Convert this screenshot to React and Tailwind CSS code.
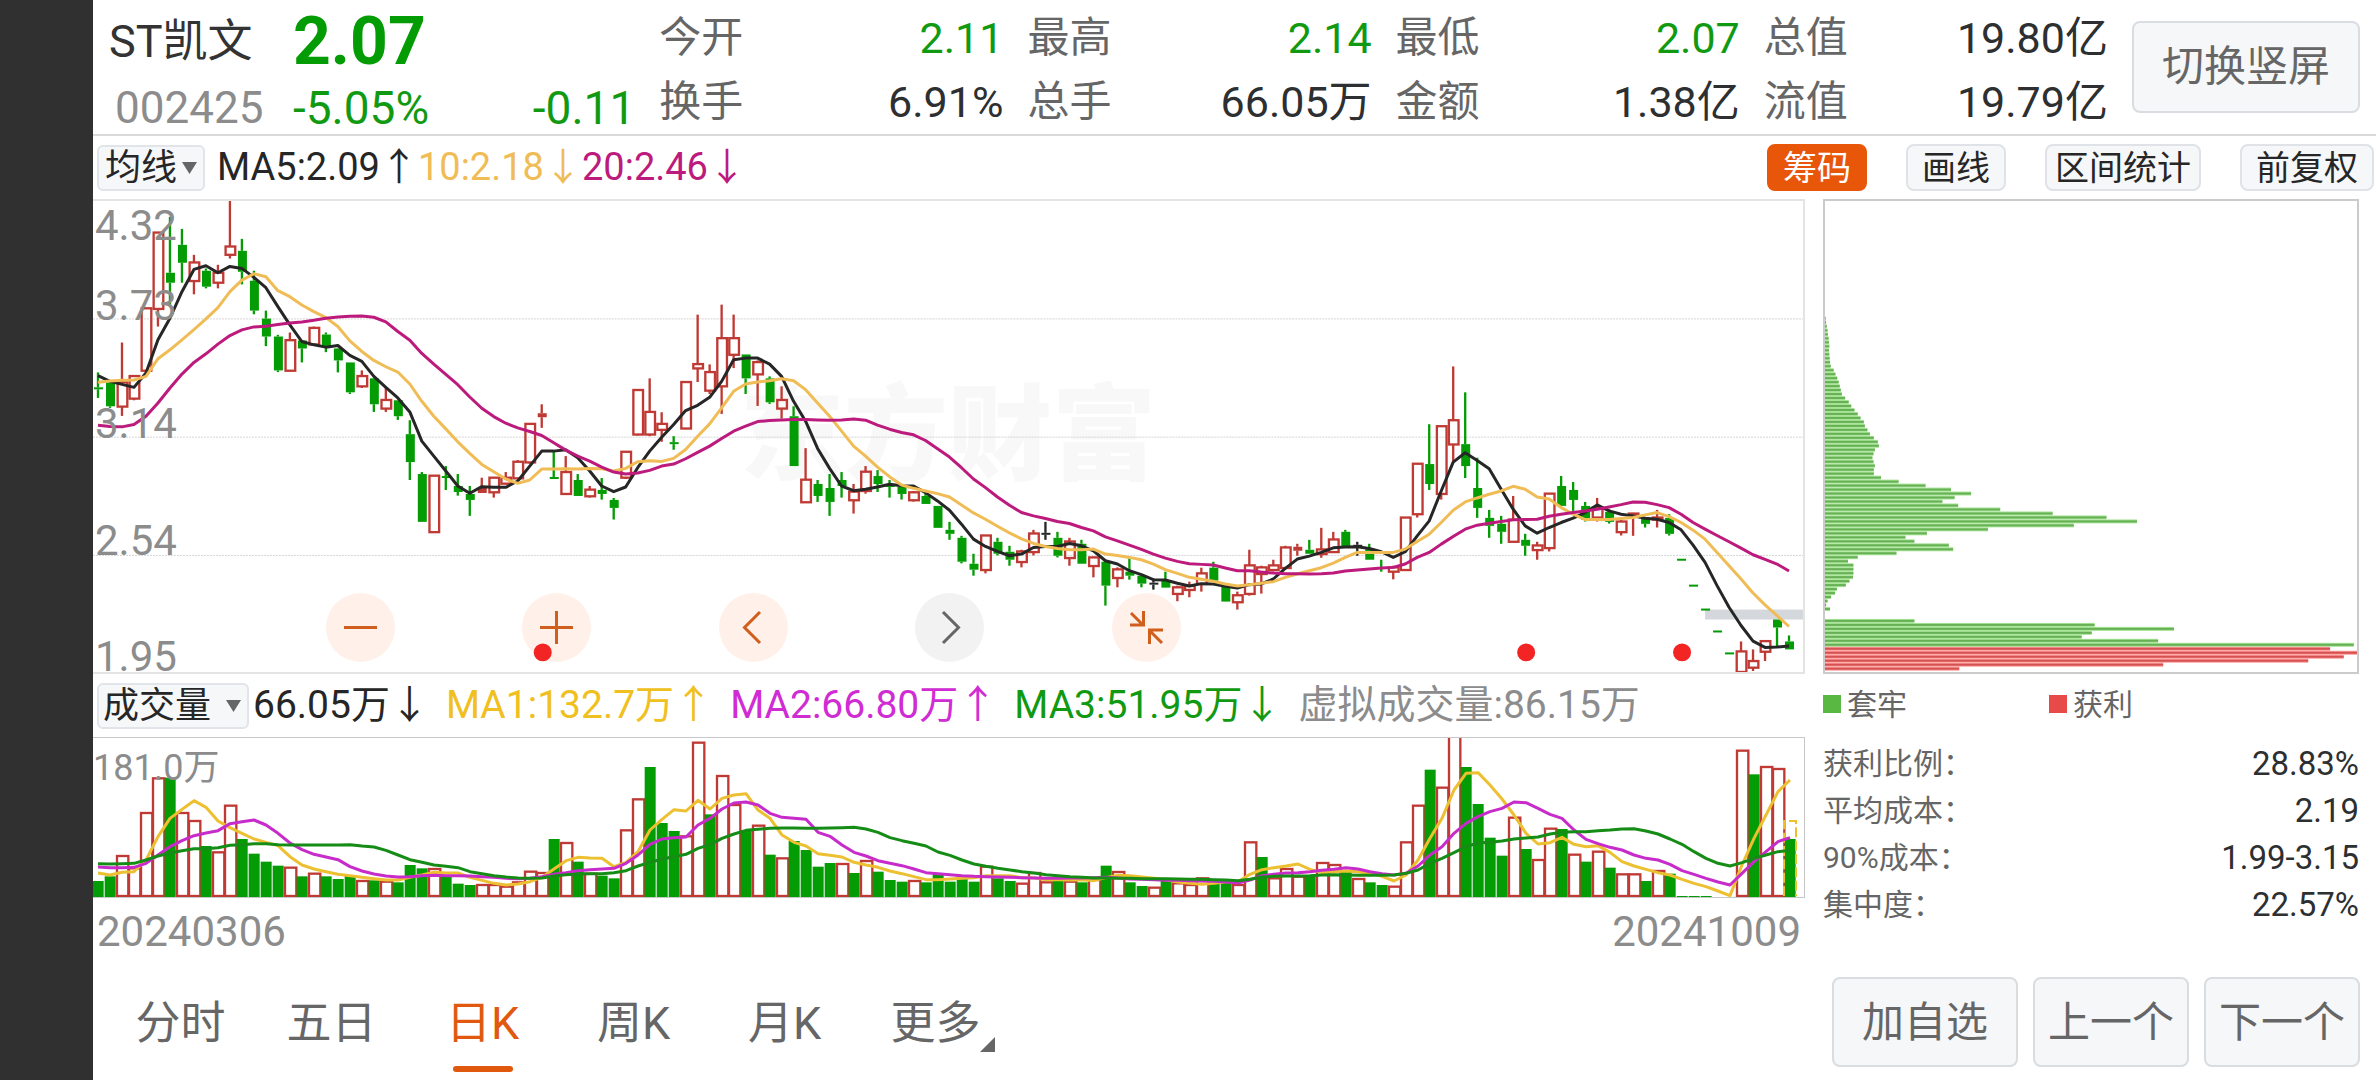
import React from "react";

const FONT = "font-['Roboto','Noto_Sans_CJK_SC',sans-serif]";

// Each candle: kind (g falling, r rising, f rising and filled, k flat), high, body top, body bottom, low.
const CANDLES = `g 543 588 594 620|g 570 573 645 650|r 453 573 646 674|r 552 554 622 627|r 350 350 538 540|r 122 122 352 405|g 75 243 273 338|g 111 159 213 273|r 189 212 268 308|g 230 237 285 290|r 219 243 273 290|r 27 164 189 200|g 141 177 240 278|g 237 267 357 368|g 357 381 435 464|g 430 435 537 542|r 423 446 538 540|g 447 447 471 513|r 405 409 459 462|g 423 429 465 482|g 470 471 507 543|g 513 513 603 608|r 537 554 585 590|g 560 561 639 662|r 590 626 652 662|g 627 627 675 686|g 687 729 813 867|g 843 849 993 993|r 854 854 1024 1024|g 825 855 861 897|g 849 885 903 914|g 885 909 927 975|f 860 891 906 906|r 858 860 904 920|r 843 860 878 880|r 807 812 862 864|r 698 698 814 818|f 639 666 678 710|g 780 858 864 864|r 795 843 909 909|g 849 867 915 915|r 885 896 916 920|g 861 897 909 926|g 921 927 951 986|r 782 782 860 864|r 596 596 730 733|r 561 662 730 735|r 663 698 716 752|g 735 753 759 776|r 572 572 712 714|r 369 518 531 572|r 519 542 598 608|r 339 440 585 668|r 369 440 490 530|g 489 489 561 608|r 507 512 549 644|g 555 561 633 638|r 585 626 652 682|g 645 675 825 825|r 771 866 934 936|g 867 879 915 933|g 849 891 933 975|g 843 867 885 920|r 879 902 928 968|r 825 842 900 908|g 837 855 879 903|g 867 882 888 920|g 885 887 909 926|r 900 904 928 932|g 905 915 939 939|g 945 945 1011 1011|g 993 1017 1029 1047|g 1035 1041 1113 1118|g 1089 1119 1137 1155|r 1034 1034 1138 1148|g 1041 1053 1089 1094|g 1065 1083 1107 1125|r 1077 1082 1114 1130|r 1017 1028 1084 1094|k 993 1026 1032 1047|g 1023 1041 1095 1100|r 1041 1052 1102 1125|g 1047 1059 1119 1119|r 1098 1100 1126 1160|g 1110 1113 1185 1245|r 1130 1136 1162 1190|g 1101 1143 1155 1167|g 1150 1155 1179 1190|k 1163 1176 1182 1197|g 1143 1170 1191 1191|r 1185 1190 1210 1232|r 1173 1186 1198 1220|r 1131 1148 1180 1203|g 1113 1131 1170 1173|g 1180 1185 1233 1233|r 1203 1214 1235 1257|r 1077 1124 1210 1215|r 1125 1130 1150 1209|r 1107 1124 1138 1142|r 1065 1070 1132 1133|f 1059 1068 1080 1095|g 1047 1077 1089 1089|r 1011 1076 1090 1101|r 1023 1046 1084 1086|g 1017 1023 1071 1071|k 1053 1062 1068 1095|g 1059 1075 1107 1107|g 1107 1129 1135 1143|r 1125 1130 1143 1166|r 980 980 1138 1140|r 818 818 970 980|g 699 819 879 897|r 705 705 909 926|r 525 687 760 810|g 603 759 825 861|g 800 891 951 981|g 957 981 1005 1041|g 975 999 1023 1059|r 915 986 1053 1054|g 1029 1047 1065 1095|r 1053 1064 1078 1107|r 908 908 1072 1082|g 855 885 945 945|g 873 897 927 960|g 933 945 987 992|r 921 950 980 992|g 955 963 993 998|r 985 992 1024 1034|r 966 968 970 1035|g 978 981 999 1010|r 957 980 986 1010|g 970 981 1029 1034|g 1104 1104 1110 1110|g 1182 1182 1188 1188|g 1254 1254 1260 1260|g 1320 1320 1326 1326|g 1386 1386 1392 1392|r 1353 1383 1445 1445|r 1377 1412 1432 1442|r 1351 1352 1384 1412|g 1287 1287 1311 1368|g 1335 1353 1377 1377`
  .split("|")
  .map((row) => {
    const [kind, ...v] = row.split(" ");
    return [kind, ...v.map(Number)];
  });

const MA5 = [553,570,579,588,545,445,380,300,233,222,243,224,230,257,288,345,400,450,460,467,462,492,510,555,588,620,662,750,795,840,885,907,887,889,889,870,825,780,780,776,800,840,885,902,888,830,780,738,700,658,642,618,570,505,500,500,518,555,630,690,772,832,885,899,895,888,880,884,885,905,930,958,1000,1045,1067,1082,1095,1090,1070,1067,1067,1058,1065,1080,1110,1120,1140,1152,1167,1168,1178,1186,1179,1180,1187,1192,1182,1180,1165,1133,1105,1096,1085,1071,1069,1068,1073,1083,1100,1083,1035,990,900,813,785,808,833,895,955,1005,1027,1010,995,982,965,942,960,970,975,982,985,995,1017,1063,1115,1185,1250,1305,1352,1371,1370,1367];
const MA10 = [573,569,567,566,555,502,475,445,414,382,348,300,265,246,255,297,315,340,360,378,405,448,480,507,526,542,578,630,675,713,752,787,820,842,864,877,867,834,834,833,834,832,833,840,832,812,809,811,802,775,735,698,650,600,578,572,568,562,568,595,635,675,720,765,795,828,857,882,892,900,908,918,942,966,985,1006,1026,1044,1058,1067,1073,1077,1077,1075,1090,1094,1100,1107,1120,1137,1148,1160,1166,1172,1180,1186,1182,1178,1173,1160,1150,1140,1131,1117,1100,1085,1085,1085,1085,1075,1052,1030,995,958,933,921,910,900,886,895,918,924,950,970,986,986,986,983,980,972,965,977,995,1018,1045,1085,1125,1165,1207,1243,1275,1308];
const MA20 = [702,706,707,700,675,635,590,548,513,487,458,432,415,406,404,399,394,391,386,380,376,374,373,377,391,420,446,486,518,549,580,617,651,676,696,710,721,733,755,777,795,810,828,843,849,846,838,825,819,803,784,765,742,720,705,691,688,686,685,685,686,687,686,683,687,702,714,724,731,748,773,798,830,864,890,918,943,965,975,983,992,998,1010,1020,1038,1050,1063,1076,1090,1102,1112,1119,1121,1123,1132,1140,1140,1144,1147,1149,1149,1150,1149,1147,1141,1138,1135,1132,1130,1120,1100,1085,1060,1037,1015,1003,997,992,987,986,985,976,970,965,960,955,948,941,933,934,941,950,970,995,1015,1034,1053,1072,1092,1106,1120,1141];

const VOLUME = "g628 g614 r553 r590 r424 r320 g318 r424 r448 g523 r542 r402 g502 g546 g570 g582 r588 g614 r606 g614 g622 g612 r628 g626 r630 g632 g580 g590 r592 g614 g636 g640 r640 r640 r645 r632 r600 r604 g502 r514 g570 r606 g612 g620 r476 r383 g286 g454 g478 r494 r213 g428 r313 r400 g476 r462 g549 r560 g508 g535 g585 g574 r577 g604 r568 g600 g625 g630 r628 g632 g606 g630 g610 g630 r585 g620 g628 r636 r604 r632 g628 r630 g632 r625 g582 r601 g632 g643 r648 g628 r635 r640 r620 g632 g634 r640 r512 g556 r620 r592 r615 g610 r574 r580 g600 r622 g632 g640 r645 r512 r402 g294 r348 r195 g286 g397 g498 g552 r438 g532 r565 r471 g472 r549 g570 r540 g588 r608 r608 g628 r598 g606 g673 g673 g673 g676 g676 r237 g308 r286 r292 g502"
  .split(" ")
  .map((t) => [t[0], Number(t.slice(1))]);
const VMA1 = [604,610,602,600,565,495,440,413,387,407,448,468,485,502,512,522,555,580,592,600,608,612,617,621,625,625,617,610,602,604,604,617,626,635,640,637,630,617,592,567,557,559,560,585,572,540,475,443,414,418,386,412,380,370,366,415,440,490,512,523,546,551,556,572,580,587,598,606,615,624,624,622,620,618,612,612,612,618,618,624,624,625,624,627,618,611,612,616,620,624,631,635,638,635,630,630,608,594,588,583,577,593,603,600,598,600,605,614,628,610,565,500,440,355,305,303,340,382,430,485,517,513,497,518,525,522,542,570,583,593,603,610,623,635,645,658,672,580,500,430,360,325];
const VMA2 = [586,588,588,587,575,550,525,507,492,484,477,456,450,445,460,485,514,534,548,556,564,585,598,607,613,616,615,612,611,612,612,613,615,617,620,621,620,615,608,603,597,594,592,590,575,550,518,502,498,496,460,440,412,394,391,400,425,437,440,443,482,494,520,542,553,567,575,582,592,603,606,609,612,614,615,616,617,618,619,620,620,619,619,618,617,619,622,623,624,626,626,627,628,629,631,634,625,612,608,604,603,600,596,593,588,592,600,606,610,605,583,550,525,485,455,435,420,410,391,393,410,428,440,475,503,516,527,535,550,560,565,578,597,608,620,631,640,605,570,540,510,498];
const VMA3 = [576,577,576,575,565,553,544,537,531,531,528,521,519,516,516,519,520,520,520,520,520,519,523,526,536,550,564,572,580,584,588,600,606,612,616,619,620,619,613,609,607,606,606,603,597,583,572,562,555,548,530,519,500,487,476,473,470,469,469,470,470,469,468,467,472,482,498,507,515,523,541,551,565,577,584,590,595,600,604,609,612,615,617,619,619,620,620,621,621,621,622,623,623,624,625,627,623,616,614,613,613,612,610,609,610,611,611,611,610,605,595,575,560,543,525,514,512,508,502,499,496,487,482,480,480,477,475,472,471,478,487,502,518,540,560,575,583,573,560,550,540,536];

// Chip distribution, one bar for each price step from high to low; the last six are in profit.
const CHIPS = [2,3,5,7,8,10,11,12,11,12,13,14,16,24,29,34,38,41,44,47,56,66,73,82,91,99,108,111,118,125,136,147,150,139,135,132,135,139,136,136,156,205,280,351,407,361,327,371,488,634,784,869,693,454,284,224,249,345,357,199,91,64,79,79,79,78,68,58,33,28,17,7,3,14,0,0,249,751,972,743,715,928,1473,1407,1482,1445,1346,942,374];

const GREEN = "#049c04";
const RED = "#bf3a34";
const BLACK = "#262626";
const xAt = (i) => 15 + 36 * i;
const line = (ys) => ys.map((y, i) => `${xAt(i)},${y}`).join(" ");

function Trend({ data, color }) {
  return <polyline points={line(data)} fill="none" stroke={color} strokeWidth="9" strokeLinejoin="round" />;
}

function Candle({ c, i }) {
  const [kind, high, top, bottom, low] = c;
  const x = xAt(i);
  const color = kind === "g" ? GREEN : kind === "k" ? BLACK : RED;
  return (
    <g>
      {high < top && <path d={`M${x} ${high}V${top}`} stroke={color} strokeWidth="7" />}
      {low > bottom && <path d={`M${x} ${bottom}V${low}`} stroke={color} strokeWidth="7" />}
      {kind === "r" ? (
        <rect x={x - 13} y={top} width="29" height={bottom - top} fill="none" stroke={color} strokeWidth="7" />
      ) : (
        <rect x={x - 12} y={top} width="27" height={bottom - top} fill={color} />
      )}
    </g>
  );
}

function PriceChart() {
  return (
    <svg viewBox="0 27 5133 1418" preserveAspectRatio="none" className="pointer-events-none relative block h-full w-full" role="img" aria-label="日K线图">
      {[382, 738, 1094].map((y) => (
        <path key={y} d={`M0 ${y}H5133`} stroke="#d4d4d4" strokeWidth="3" strokeDasharray="6 3" />
      ))}
      <rect x={xAt(134)} y="1257" width="294" height="30" fill="#d4d7dc" />
      {CANDLES.map((c, i) => (
        <Candle key={i} c={c} i={i} />
      ))}
      <Trend data={MA5} color={BLACK} />
      <Trend data={MA10} color="#f0bc55" />
      <Trend data={MA20} color="#bc1a7c" />
      {[1350, 4302, 4770].map((x) => (
        <circle key={x} cx={x} cy="1386" r="27" fill="#f22424" />
      ))}
    </svg>
  );
}

function VolumeChart() {
  return (
    <svg viewBox="0 199 5133 477" preserveAspectRatio="none" className="block h-full w-full" role="img" aria-label="成交量图">
      {VOLUME.map(([kind, y], i) =>
        kind === "g" ? (
          <rect key={i} x={xAt(i) - 16} y={y} width="33" height={676 - y} fill={GREEN} />
        ) : (
          <rect key={i} x={xAt(i) - 15} y={y} width="34" height={673 - y} fill="none" stroke={RED} strokeWidth="7" />
        )
      )}
      <path d={`M${xAt(141) - 18} 673V448h36V673`} fill="none" stroke="#f0c02c" strokeWidth="6" strokeDasharray="30 10" />
      <Trend data={VMA1} color="#ecc031" />
      <Trend data={VMA2} color="#c72ccb" />
      <Trend data={VMA3} color="#158c15" />
    </svg>
  );
}

function ChipChart() {
  return (
    <svg viewBox="0 27 1482 1420" preserveAspectRatio="none" className="block h-full w-full" role="img" aria-label="筹码分布">
      {CHIPS.map((w, i) => {
        const y = 381 + 12 * i;
        const profit = i >= CHIPS.length - 6;
        return (
          <g key={i}>
            <rect x="0" y={y - 6} width={w} height="12" fill={profit ? "#fd9a98" : "#a5e394"} />
            <rect x="0" y={y - 3} width={w} height="6" fill={profit ? "#d45252" : "#67b055"} />
          </g>
        );
      })}
    </svg>
  );
}

function Stat({ label, value, tone }) {
  return (
    <div className="flex h-[64px] items-center justify-between">
      <dt className="text-[#666666]">{label}</dt>
      <dd className={`text-[43px] ${tone}`}>{value}</dd>
    </div>
  );
}

const UP = "text-[#2d2f31]";
const DOWN = "text-[#119a11]";
const STATS = [
  [["今开", "2.11", DOWN], ["换手", "6.91%", UP]],
  [["最高", "2.14", DOWN], ["总手", "66.05万", UP]],
  [["最低", "2.07", DOWN], ["金额", "1.38亿", UP]],
  [["总值", "19.80亿", UP], ["流值", "19.79亿", UP]],
];

function Header() {
  return (
    <header className="grid grid-cols-[566fr_368fr_368fr_368fr_368fr_244fr] border-b-2 border-[#dadada] text-[42px] leading-[64px]">
      <div className="grid grid-cols-[184px_1fr] grid-rows-[66px_58px] pt-2.5 pr-6 pl-4">
        <h1 className="text-[45px] text-[#333333]">ST凯文</h1>
        <strong className="text-[66px] font-bold text-[#049c04]">2.07</strong>
        <span className="pl-1.5 text-[44px] text-[#8c8c8c]">002425</span>
        <div className="flex justify-between text-[46px] text-[#119a11]">
          <span>-5.05%</span>
          <span>-0.11</span>
        </div>
      </div>
      {STATS.map((pair) => (
        <dl key={pair[0][0]} className="pt-1.5 pr-6">
          {pair.map(([label, value, tone]) => (
            <Stat key={label} label={label} value={value} tone={tone} />
          ))}
        </dl>
      ))}
      <div className="flex items-center pr-4">
        <button className="h-[92px] w-full rounded-lg border-2 border-[#d9dde2] bg-[#f6f7f9] text-[#666666]">切换竖屏</button>
      </div>
    </header>
  );
}

function Picker({ label, options, className }) {
  return (
    <div className="relative flex items-center">
      <select aria-label={label} className={`h-[46px] appearance-none rounded-md border-2 border-[#e1e4e8] bg-[#f6f7f9] text-[36px] leading-[42px] text-[#262626] ${className}`}>
        {options.map((o) => (
          <option key={o}>{o}</option>
        ))}
      </select>
      <svg viewBox="0 0 15 12" className="pointer-events-none absolute right-2 h-3 w-[15px]" aria-hidden="true">
        <path d="M0 0h15L7.5 12z" fill="#666666" />
      </svg>
    </div>
  );
}

function ToolButton({ children, active, snug }) {
  return (
    <button
      aria-pressed={!!active}
      className={`h-[47px] rounded-lg border-2 text-[34px] leading-[42px] ${snug ? "px-2" : "px-3.5"} ${
        active ? "border-[#e8560a] bg-[#e8560a] text-white" : "border-[#dfe2e6] bg-[#f6f7f9] text-[#262626]"
      }`}
    >
      {children}
    </button>
  );
}

function Toolbar() {
  return (
    <div className="flex h-[63px] items-center justify-between pr-0.5 pl-1">
      <div className="flex items-center text-[38px]">
        <Picker label="主图指标" options={["均线", "BOLL"]} className="w-[108px] pl-1.5" />
        <span className="ml-3 text-[#262626]">MA5:2.09↑</span>
        <span className="text-[#f0bc55]">10:2.18↓</span>
        <span className="text-[#bc1a7c]">20:2.46↓</span>
      </div>
      <div className="flex gap-[39px]">
        <ToolButton active>筹码</ToolButton>
        <ToolButton>画线</ToolButton>
        <ToolButton snug>区间统计</ToolButton>
        <ToolButton>前复权</ToolButton>
      </div>
    </div>
  );
}

const CONTROLS = [
  ["缩小", "M18 34.5h33"],
  ["放大", "M18 34.5h33M34.5 18v33"],
  ["向左", "M41 19 25.500 34.500 41 50"],
  ["向右", "M28 19 43.500 34.500 28 50"],
  ["退出全屏", "M19 20 31 32M18 32h13.500V18M50 50 38 38M51 37H37.500V51"],
];

function ChartControls() {
  return (
    <div className="absolute right-[36.4%] bottom-2.5 left-[13.6%] flex justify-between">
      {CONTROLS.map(([name, d]) => {
        const off = name === "向右";
        return (
          <button key={name} aria-label={name} className={`size-[69px] rounded-full ${off ? "bg-[#f2f2f2]" : "bg-[#fff1e9]"}`}>
            <svg viewBox="0 0 69 69" className="size-full" fill="none" stroke={off ? "#666666" : "#d05e1c"} strokeWidth="3">
              <path d={d} />
            </svg>
          </button>
        );
      })}
    </div>
  );
}

function PricePanel() {
  return (
    <div className="relative h-[475px] border-2 border-l-0 border-[#e4e4e4]">
      <div className="absolute inset-0 flex items-center justify-center text-[104px] font-black text-[#f8f8f8]" aria-hidden="true">
        东方财富
      </div>
      <ChartControls />
      <PriceChart />
      <div className="pointer-events-none absolute inset-0 pl-0.5 text-[42px] leading-[40px] text-[#8c8c8c]">
        <span className="absolute top-[1%]">4.32</span>
        <span className="absolute top-[18%]">3.73</span>
        <span className="absolute top-[43%]">3.14</span>
        <span className="absolute top-[68%]">2.54</span>
        <span className="absolute bottom-[-1%]">1.95</span>
      </div>
    </div>
  );
}

function VolumeLegend() {
  return (
    <div className="flex h-[63px] items-center gap-[17px] pl-1 text-[39px] whitespace-nowrap">
      <div className="flex items-center gap-1 text-[#262626]">
        <Picker label="副图指标" options={["成交量", "MACD"]} className="w-[152px] pl-1" />
        <span>66.05万↓</span>
      </div>
      <span className="text-[#f0c020]">MA1:132.7万↑</span>
      <span className="text-[#d02cd4]">MA2:66.80万↑</span>
      <span className="text-[#119a11]">MA3:51.95万↓</span>
      <span className="text-[#8c8c8c]">虚拟成交量:86.15万</span>
    </div>
  );
}

const COSTS = [
  ["获利比例", "28.83%"],
  ["平均成本", "2.19"],
  ["90%成本", "1.99-3.15"],
  ["集中度", "22.57%"],
];

function ChipPanel() {
  return (
    <aside>
      <div className="h-[475px] border-2 border-[#cbcbcb]">
        <ChipChart />
      </div>
      <div className="grid h-[60px] grid-cols-[226fr_310fr] items-center text-[30px] text-[#666666]">
        <span className="flex items-center gap-1.5">
          <i className="size-[18px] bg-[#58b842]" />
          套牢
        </span>
        <span className="flex items-center gap-1.5">
          <i className="size-[18px] bg-[#e84a4a]" />
          获利
        </span>
      </div>
      <dl className="pt-1.5 text-[30px] leading-[47px] text-[#666666]">
        {COSTS.map(([label, value]) => (
          <div key={label} className="flex justify-between">
            <dt>{label}：</dt>
            <dd className="text-[33px] text-[#2d2f31]">{value}</dd>
          </div>
        ))}
      </dl>
    </aside>
  );
}

const TABS = ["分时", "五日", "日K", "周K", "月K", "更多"];

function Footer() {
  return (
    <footer className="flex items-center justify-between pt-3.5 pr-4 pl-3 text-[42px] text-[#666666]">
      <nav className="grid w-[906px] grid-cols-6 text-[45px] leading-[64px]" aria-label="周期">
        {TABS.map((tab) => (
          <button key={tab} aria-current={tab === "日K" ? "page" : undefined} className="relative flex flex-col items-center pt-5">
            <span className={tab === "日K" ? "text-[#e0590f]" : ""}>{tab}</span>
            <span className={`mt-2.5 h-1.5 w-[60px] rounded-full ${tab === "日K" ? "bg-[#e0590f]" : ""}`} />
            {tab === "更多" && (
              <svg viewBox="0 0 15 15" className="absolute right-4 bottom-5 size-[15px]" aria-hidden="true">
                <path d="M15 0v15H0z" fill="#666666" />
              </svg>
            )}
          </button>
        ))}
      </nav>
      <div className="flex gap-[15px]">
        {["加自选", "上一个", "下一个"].map((text) => (
          <button key={text} className={`h-[90px] rounded-lg border-2 border-[#d9dde0] bg-[#f6f7f9] ${text === "加自选" ? "px-[28px]" : "px-[13px]"}`}>
            {text}
          </button>
        ))}
      </div>
    </footer>
  );
}

export default function App() {
  return (
    <div className={`flex min-h-screen bg-white ${FONT}`}>
      <div className="w-[93px] shrink-0 bg-[#303030]" />
      <main className="min-w-0 flex-1">
        <Header />
        <Toolbar />
        <div className="grid grid-cols-[1712fr_536fr] gap-x-[18px] pr-[17px]">
          <section className="min-w-0">
            <PricePanel />
            <VolumeLegend />
            <div className="relative h-[161px] border border-l-0 border-[#c8c8c8]">
              <VolumeChart />
              <span className="absolute top-2.5 left-0 text-[36px] leading-[40px] text-[#8c8c8c]">181.0万</span>
            </div>
            <div className="flex justify-between px-1 pt-2 text-[42px] leading-[52px] text-[#8c8c8c]">
              <time>20240306</time>
              <time>20241009</time>
            </div>
          </section>
          <ChipPanel />
        </div>
        <Footer />
      </main>
    </div>
  );
}
